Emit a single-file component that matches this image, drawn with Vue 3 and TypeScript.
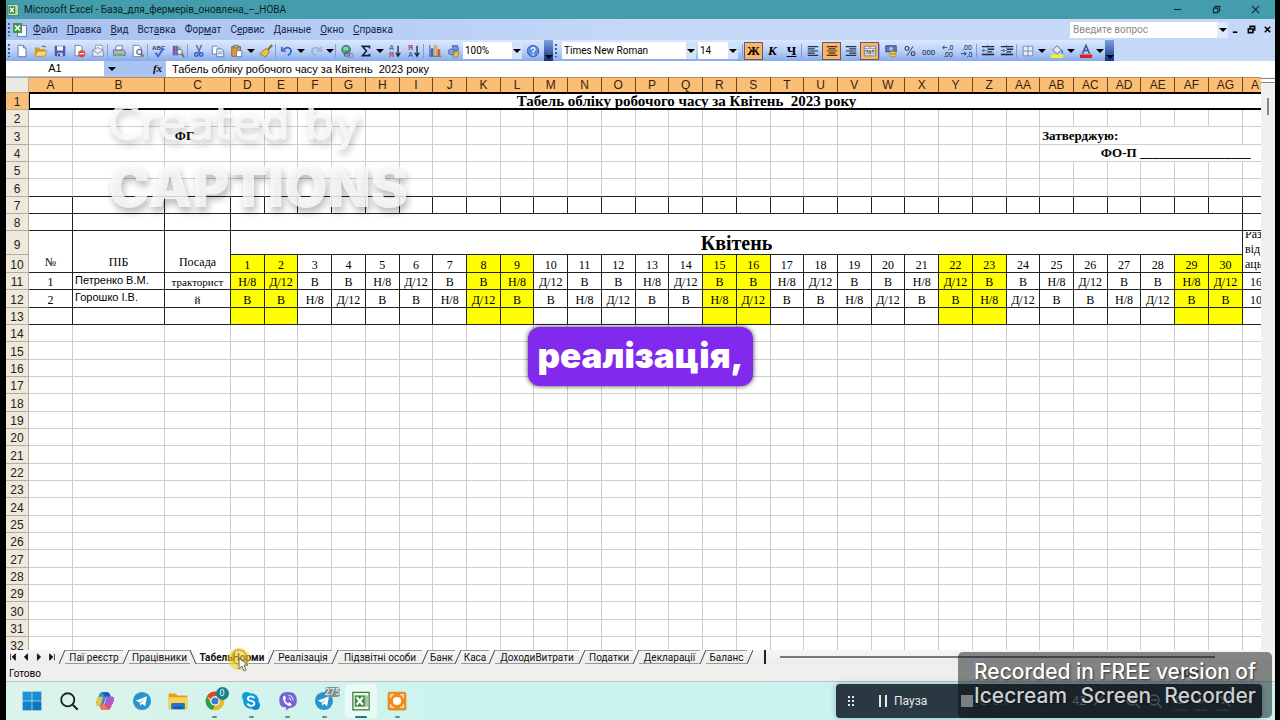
<script setup lang="ts">
import { ref } from 'vue'

interface Tool { kind: 'btn' | 'sep' | 'arrow'; icon?: string; label?: string; on?: boolean }
interface Tab { name: string; width: number; active?: boolean }
interface App { name: string; icon: string; running?: boolean; active?: boolean; badge?: string; tone?: string }
interface Cell { text?: string; span?: number; rows?: number; cls?: string; lines?: string[] }
interface Row { n: number; cells: Cell[]; cls?: string }

const icons: Record<string, string> = {
  new: '<path d="M3.5 1.5h6l3 3v10h-9z" fill="#fff" stroke="#5a6f96"/><path d="M9.500 1.500v3h3" fill="#cbd8ee" stroke="#5a6f96"/>',
  open: '<path d="M1 4h5l1 2h6v8H1z" fill="#d9962a"/><path d="M1 14l3-6h11l-3 6z" fill="#ffd76b" stroke="#b57a1c" stroke-width=".7"/><path d="M9 3q3-2 4 1" fill="none" stroke="#557" stroke-width="1.200"/>',
  save: '<path d="M2 2h12v12H2z" fill="#4b57b8"/><path d="M4.500 2.500h7v5h-7z" fill="#eef1fb"/><path d="M5 10h6v4H5z" fill="#c8cfe6"/><path d="M6 11h2v3H6z" fill="#333c80"/>',
  perm: '<path d="M3.500 1.500h6l2 2v10h-8z" fill="#fff" stroke="#66789c"/><circle cx="11" cy="11" r="4" fill="#e0452c"/><path d="M8.500 10.200h5v1.600h-5z" fill="#fff"/>',
  mail: '<path d="M5 1.500h8v8H5z" fill="#fff" stroke="#8793ab"/><path d="M2 7l6-3 6 3v7H2z" fill="#e7ebf4" stroke="#7d8aa6"/><path d="M2 7l6 4 6-4" fill="none" stroke="#7d8aa6"/>',
  print: '<path d="M5 2h7l-1 5H4z" fill="#fff" stroke="#6a7890"/><path d="M1.500 7h12l1.500 2v4H2z" fill="#aeb8c8" stroke="#59677f"/><path d="M4 11h8v3H4z" fill="#6fb35c"/>',
  preview: '<path d="M2.500 1.500h6l3 3v10h-9z" fill="#fff" stroke="#66789c"/><circle cx="9.500" cy="9" r="3" fill="#d8ecfb" stroke="#555f75" stroke-width="1.200"/><path d="M11.500 11.500l3 3" stroke="#8b6b3a" stroke-width="2"/>',
  spell: '<text x="0" y="7" font-size="7" font-weight="700" font-family="Liberation Sans" fill="#333c55">ABC</text><path d="M4 10l3 4 6-9" fill="none" stroke="#4668d6" stroke-width="2.300"/>',
  research: '<path d="M2 2h3v11H2z" fill="#8b4d9c"/><path d="M5 2h3v11H5z" fill="#4a74c9"/><path d="M8 3h3v10H8z" fill="#d5a748"/><circle cx="10" cy="9" r="3" fill="#e4f1fb" stroke="#555f75"/><path d="M12 11l3 4" stroke="#8b6b3a" stroke-width="2"/>',
  cut: '<path d="M5 1l4 9M11 1L7 10" stroke="#5d6f94" stroke-width="1.500"/><circle cx="5" cy="12" r="2" fill="none" stroke="#2f5cc4" stroke-width="1.600"/><circle cx="10.500" cy="12" r="2" fill="none" stroke="#2f5cc4" stroke-width="1.600"/>',
  copy: '<path d="M1.500 2.500h5l2 2v7h-7z" fill="#fff" stroke="#5f77ab"/><path d="M6.500 5.500h5l3 2v7h-8z" fill="#e9effb" stroke="#5f77ab"/><path d="M8 9h5M8 11h5" stroke="#7f97c8"/>',
  paste: '<path d="M2 3h10v11H2z" fill="#d99b32" stroke="#8c5f17"/><path d="M4.500 1.500h5v3h-5z" fill="#b8bfcc" stroke="#666"/><path d="M7.500 7.500h6v7h-6z" fill="#fff" stroke="#5f77ab"/>',
  brush: '<path d="M15 1l-5 6" stroke="#8a6a2f" stroke-width="2.500"/><path d="M8 5l4 4-5 6-6-4z" fill="#f0c04d" stroke="#96701f"/>',
  undo: '<path d="M2 3v5h5" fill="none" stroke="#3d63c6" stroke-width="1.800"/><path d="M3 7q6-5 9-1 2 4-3 7" fill="none" stroke="#3d63c6" stroke-width="2"/>',
  redo: '<path d="M14 3v5H9" fill="none" stroke="#9db0d6" stroke-width="1.800"/><path d="M13 7Q7 2 4 6q-2 4 3 7" fill="none" stroke="#9db0d6" stroke-width="2"/>',
  link: '<circle cx="7" cy="6.500" r="5" fill="#4a9c8c" stroke="#2b6b7c"/><path d="M4 4q3-2 5 0t-2 3-3 0z" fill="#98d67f"/><rect x="5" y="10" width="6" height="4" rx="2" fill="none" stroke="#54627f" stroke-width="1.400"/><rect x="9" y="11" width="6" height="4" rx="2" fill="none" stroke="#8592ad" stroke-width="1.400"/>',
  sum: '<path d="M12 5V2.800H4L8.500 8 4 13.200h8V11" fill="none" stroke="#16213f" stroke-width="1.900"/>',
  az: '<text x="1" y="7" font-size="8" font-weight="700" font-family="Liberation Sans" fill="#4a5fb5">А</text><text x="1" y="15" font-size="8" font-weight="700" font-family="Liberation Sans" fill="#a8485c">Я</text><path d="M11.500 2v11M9 10l2.500 4 2.500-4" fill="none" stroke="#1d2440" stroke-width="1.500"/>',
  za: '<text x="1" y="7" font-size="8" font-weight="700" font-family="Liberation Sans" fill="#a8485c">Я</text><text x="1" y="15" font-size="8" font-weight="700" font-family="Liberation Sans" fill="#4a5fb5">А</text><path d="M11.500 2v11M9 10l2.500 4 2.500-4" fill="none" stroke="#1d2440" stroke-width="1.500"/>',
  chart: '<path d="M2 1v13h13" fill="none" stroke="#4b5877"/><path d="M3 5h3v9H3z" fill="#3f63c9"/><path d="M7 2h3v12H7z" fill="#edc44b" stroke="#95701f" stroke-width=".5"/><path d="M11 6h3v8h-3z" fill="#cf5a35"/>',
  draw: '<path d="M6 2l6 0 1 5-5 1z" fill="#7c93dd" stroke="#3c519c"/><circle cx="5" cy="9" r="3.500" fill="#7f9ce0" stroke="#3c519c" stroke-width=".7"/><path d="M8 9h6l-2 6H7z" fill="#e8bf5b" stroke="#8b671c" stroke-width=".7"/>',
  help: '<circle cx="8" cy="8" r="6.500" fill="#5b8de0" stroke="#2c57ab"/><path d="M5.800 6.300q.3-2.300 2.400-2.200 2.200.2 2.100 2-.1 1.200-2.100 2.300V10" fill="none" stroke="#fff" stroke-width="1.500"/><circle cx="8.200" cy="12" r="1" fill="#fff"/>',
  left: '<path d="M2 3h12M2 5.500h8M2 8h12M2 10.500h8M2 13h12" stroke="#27304d" stroke-width="1.300"/>',
  center: '<path d="M2 3h12M4 5.500h8M2 8h12M4 10.500h8M2 13h12" stroke="#4b3018" stroke-width="1.300"/>',
  right: '<path d="M2 3h12M6 5.500h8M2 8h12M6 10.500h8M2 13h12" stroke="#27304d" stroke-width="1.300"/>',
  merge: '<path d="M1.500 2.500h13v11h-13z" fill="#f4f4f4" stroke="#777"/><path d="M8 2v3M8 11v3M1 5h14M1 11h14" stroke="#888"/><path d="M2 8h3M14 8h-3M4 6.500L6 8 4 9.500M12 6.500L10 8l2 1.500" stroke="#2b3c78" fill="none"/><text x="6" y="10.500" font-size="6" font-family="Liberation Sans" fill="#111">a</text>',
  money: '<path d="M2 2h12v7H2z" fill="#5c79b8" stroke="#34497c"/><circle cx="8" cy="5.500" r="2" fill="#b8cbee"/><ellipse cx="10" cy="10" rx="4" ry="1.800" fill="#ecc45a" stroke="#8b671c" stroke-width=".6"/><ellipse cx="10" cy="13" rx="4" ry="1.800" fill="#ecc45a" stroke="#8b671c" stroke-width=".6"/>',
  pct: '<circle cx="4.500" cy="5" r="2.200" fill="none" stroke="#2b3350" stroke-width="1.200"/><circle cx="11.500" cy="11" r="2.200" fill="none" stroke="#2b3350" stroke-width="1.200"/><path d="M11.500 2.500l-7 11" stroke="#2b3350"/>',
  zeros: '<text x="0" y="12" font-size="9" font-family="Roboto" fill="#1f2742">000</text>',
  incdec: '<text x="8" y="7" font-size="8" font-family="Roboto" fill="#1f2742">,0</text><text x="3" y="15" font-size="8" font-family="Roboto" fill="#1f2742">,00</text><path d="M7 4H2M4 2L2 4l2 2" fill="none" stroke="#3658c0" stroke-width="1.200"/>',
  decdec: '<text x="3" y="7" font-size="8" font-family="Roboto" fill="#1f2742">,00</text><text x="8" y="15" font-size="8" font-family="Roboto" fill="#1f2742">,0</text><path d="M1 11h6M5 9l2 2-2 2" fill="none" stroke="#3658c0" stroke-width="1.200"/>',
  outdent: '<path d="M1 3h14M8 6h7M8 9h5M1 12h14" stroke="#1f2742" stroke-width="1.500"/><path d="M6 7.500H1.500M3.500 5.500l-2 2 2 2" stroke="#3658c0" fill="none"/><path d="M7.500 1v14" stroke="#555" stroke-dasharray="1 1"/>',
  indent: '<path d="M1 3h14M8 6h7M8 9h5M1 12h14" stroke="#1f2742" stroke-width="1.500"/><path d="M1 7.500h4.500M3.500 5.500l2 2-2 2" stroke="#3658c0" fill="none"/><path d="M7.500 1v14" stroke="#555" stroke-dasharray="1 1"/>',
  border: '<path d="M2.500 2.500h11v11h-11zM8 2.500v11M2.500 8h11" fill="#e6eefc" stroke="#7484a6"/>',
  fill: '<path d="M3 7l5-5 5 5-5 4z" fill="#e3e8f2" stroke="#56647f"/><path d="M13 7q2 2 1 4" stroke="#3a66c9" stroke-width="1.600" fill="none"/><path d="M1 12h14v4H1z" fill="#f3ee2e"/>',
  color: '<path d="M4 11L8 1.500 12 11M5.500 7.500h5" fill="none" stroke="#3d5590" stroke-width="1.700"/><path d="M1 12h14v4H1z" fill="#e02020"/>',
  fx: '<text x="2" y="12" font-size="12" font-style="italic" font-weight="700" font-family="Liberation Serif" fill="#111">fx</text>',
  excel: '<path d="M1 1h14v14H1z" fill="#e9f4e4" stroke="#2e7a35"/><path d="M10.500 3h4v10h-4z" fill="#b7d7ae"/><path d="M2 3h9v10H2z" fill="#348a3c"/><path d="M4 5l5 6M9 5l-5 6" stroke="#fff" stroke-width="1.800"/>',
  book: '<path d="M5.500 3.500h9v11h-9z" fill="#f5f8ff" stroke="#6c7fae"/><path d="M1 1h9v10H1z" fill="#3f9a45"/><path d="M3 3.500l5 5M8 3.500l-5 5" stroke="#fff" stroke-width="1.500"/>',
  win: '<path d="M1 1h14.500v14.500H1z" fill="#1f93dc"/><path d="M16.500 1H31v14.500H16.500z" fill="#188bd5"/><path d="M1 16.500h14.500V31H1z" fill="#157fca"/><path d="M16.500 16.500H31V31H16.500z" fill="#0f73bd"/>',
  search: '<circle cx="14" cy="14" r="10.500" fill="none" stroke="#1c2626" stroke-width="3"/><path d="M22 22l8 8" stroke="#1c2626" stroke-width="3.500"/>',
  copilot: '<path d="M11 2h9q3 0 4 4l1 3h-7l-5 14H5q-5 0-3-6L7 5q1-3 4-3z" fill="#2a8fd8"/><path d="M11 2h9q3 0 4 4l1 3h-7q-3 0-4-3-1-3-3-4z" fill="#2356b8"/><path d="M2 17L5 9h8l-4 14H5q-5 0-3-6z" fill="#e6c43c"/><path d="M21 30h-9q-3 0-4-4l-1-3h7l5-14h8q5 0 3 6l-5 12q-1 3-4 3z" fill="#d94f8e"/><path d="M19 9h8q5 0 3 6l-2 6h-9l-1-8z" fill="#a95ad5"/><path d="M21 30h-9q-3 0-4-4l-1-3h7q3 0 4 3t3 4z" fill="#ef7e46"/>',
  telegram: '<circle cx="16" cy="16" r="14.500" fill="#2a94cf"/><path d="M6 15.500l18-7-3 16-5-4-3 3-.5-5z" fill="#fff"/><path d="M12.500 18.500l8-7-6 8z" fill="#8dbfde"/>',
  folder: '<path d="M1 4h11l3 3h16v22H1z" fill="#e0a21d"/><path d="M1 10h30v19H1z" fill="#fbd158"/><path d="M5 21q0-2 2-2h18q2 0 2 2v8H5z" fill="#1f77cc"/><path d="M9 25h14v4H9z" fill="#155ba5"/>',
  chrome: '<circle cx="16" cy="16" r="15" fill="#e3bd2b"/><path d="M16 16L3 8.500A15 15 0 0 1 29 8.500H16z" fill="#d94433"/><path d="M3 8.500L10 20l6 3-4 7.500A15 15 0 0 1 3 8.500z" fill="#2e9a4c"/><circle cx="16" cy="16" r="7.500" fill="#fff"/><circle cx="16" cy="16" r="5.700" fill="#3b79dd"/>',
  skype: '<circle cx="16" cy="16" r="12.500" fill="#119bdc"/><circle cx="9" cy="9" r="7.500" fill="#119bdc"/><circle cx="23" cy="23" r="7.500" fill="#0d8dd0"/><path d="M21 11.500q-1-3-5-3-5 0-5 3.500 0 3 5 3.800 5.500 1 5.500 4 0 3.700-5.500 3.700-4.500 0-5.500-3.500" fill="none" stroke="#fff" stroke-width="3"/>',
  viber: '<path d="M5 5q3-3.500 11-3.500T27 5q3 3 3 10t-3 9q-3 3-9 3l-5 4v-4.500Q7 26 5 24q-3-3-3-9.500T5 5z" fill="#7a62d8"/><path d="M10 7q2 1 3 5l-2 2q1 4 5 6l2-2q3 1 4 4-2 3-6 1Q9 20 8 11q0-3 2-4z" fill="#fff"/><path d="M17 7q7 1 7 8M17 11q3 0 3.500 4" fill="none" stroke="#fff" stroke-width="1.500"/>',
  xl: '<path d="M3 2h26v28H3z" fill="#eff6e9" stroke="#357c3b" stroke-width="2"/><path d="M21 7h6v18h-6z" fill="#9fc896"/><path d="M6 7h16v18H6z" fill="#3d8944"/><path d="M9 10l10 12M19 10L9 22" stroke="#fff" stroke-width="3.500"/>',
  ice: '<rect x="1" y="1" width="30" height="30" rx="4" fill="#ef8a1d"/><circle cx="16" cy="16" r="6.500" fill="#fff"/><path d="M6 11V6h5M21 6h5v5M26 21v5h-5M11 26H6v-5" fill="none" stroke="#fff" stroke-width="1.800"/>',
}

const b = (icon: string, label: string, on = false): Tool => ({ kind: 'btn', icon, label, on })
const sep: Tool = { kind: 'sep' }
const arrow: Tool = { kind: 'arrow', label: 'Ещё' }

const standard: Tool[] = [
  b('new', 'Создать'), b('open', 'Открыть'), b('save', 'Сохранить'), b('perm', 'Разрешения'), b('mail', 'Сообщение'), sep,
  b('print', 'Печать'), b('preview', 'Предварительный просмотр'), sep, b('spell', 'Орфография'), b('research', 'Справочные материалы'), sep,
  b('cut', 'Вырезать'), b('copy', 'Копировать'), b('paste', 'Вставить'), arrow, b('brush', 'Формат по образцу'), sep,
  b('undo', 'Отменить'), arrow, b('redo', 'Вернуть'), arrow, sep, b('link', 'Гиперссылка'), b('sum', 'Автосумма'), arrow,
  b('az', 'По возрастанию'), b('za', 'По убыванию'), sep, b('chart', 'Диаграмма'), b('draw', 'Рисование'),
]
const formatting: Tool[] = [
  b('left', 'По левому краю'), b('center', 'По центру', true), b('right', 'По правому краю'), b('merge', 'Объединить', true), sep,
  b('money', 'Денежный формат'), b('pct', 'Процентный формат'), b('zeros', 'Формат с разделителями'), b('incdec', 'Увеличить разрядность'), b('decdec', 'Уменьшить разрядность'), sep,
  b('outdent', 'Уменьшить отступ'), b('indent', 'Увеличить отступ'), sep, b('border', 'Границы'), arrow, b('fill', 'Цвет заливки'), arrow, b('color', 'Цвет шрифта'), arrow,
]

const menus: [string, string, string][] = [
  ['', 'Ф', 'айл'], ['', 'П', 'равка'], ['', 'В', 'ид'], ['Вст', 'а', 'вка'], ['Фор', 'м', 'ат'],
  ['С', 'е', 'рвис'], ['', 'Д', 'анные'], ['', 'О', 'кно'], ['', 'С', 'правка'],
]

const letters = 'ABCDEFGHIJKLMNOPQRSTUVWXYZ'.split('')
const columns = [...letters, ...letters.slice(0, 7).map(l => 'A' + l), 'A']

const weekend = (d: number) => [1, 2].includes(d % 7)
const days = Array.from({ length: 30 }, (_, i) => i + 1)
const shift = ['Н/8', 'Д/12', 'В', 'В']
const dayCells = (text: (d: number) => string): Cell[] =>
  days.map(d => ({ text: text(d), cls: weekend(d) ? 'k yellow' : 'k' }))
const empty = (count: number, cls = ''): Cell[] => Array.from({ length: count }, () => ({ cls }))

const rows: Row[] = [
  { n: 1, cls: 'selected', cells: [{ text: 'Табель обліку робочого часу за Квітень\u00a0 2023 року', span: 34, cls: 'title' }] },
  { n: 2, cells: empty(34) },
  { n: 3, cells: [...empty(2), { text: 'ФГ', cls: 'bold indent' }, ...empty(24), { text: 'Затверджую:', span: 6, cls: 'bold start' }, {}] },
  { n: 4, cells: [...empty(27), { text: 'ФО-П _________________', span: 7, cls: 'bold sign' }] },
  { n: 5, cells: empty(34) },
  { n: 6, cells: empty(34, 'over') },
  { n: 7, cells: empty(34, 'k') },
  { n: 8, cells: [...empty(3, 'k'), { span: 30, cls: 'k' }, { cls: 'k' }] },
  { n: 9, cls: 'tall', cells: [
    { text: '№', rows: 2, cls: 'k head' }, { text: 'ПІБ', rows: 2, cls: 'k head' }, { text: 'Посада', rows: 2, cls: 'k head' },
    { text: 'Квітень', span: 30, cls: 'k month' }, { lines: ['Раз', 'від', 'аць'], rows: 2, cls: 'k' }] },
  { n: 10, cells: dayCells(d => String(d)) },
  { n: 11, cells: [{ text: '1', cls: 'k' }, { text: 'Петренко В.М.', cls: 'k name' }, { text: 'тракторист', cls: 'k post' }, ...dayCells(d => shift[(d - 1) % 4]), { text: '16', cls: 'k edge' }] },
  { n: 12, cells: [{ text: '2', cls: 'k' }, { text: 'Горошко І.В.', cls: 'k name' }, { text: 'й', cls: 'k post' }, ...dayCells(d => shift[(d + 1) % 4]), { text: '10', cls: 'k edge' }] },
  { n: 13, cells: [...empty(3, 'k'), ...dayCells(() => ''), { cls: 'k' }] },
  ...Array.from({ length: 19 }, (_, i) => ({ n: 14 + i, cells: empty(34) })),
]

const tabs: Tab[] = [
  { name: 'Паї реєстр', width: 64 }, { name: 'Працівники', width: 67 }, { name: 'ТабельНорми', width: 78, active: true },
  { name: 'Реалізація', width: 64 }, { name: 'Підзвітні особи', width: 90 }, { name: 'Банк', width: 33 }, { name: 'Каса', width: 34 },
  { name: 'ДоходиВитрати', width: 90 }, { name: 'Податки', width: 54 }, { name: 'Декларації', width: 67 }, { name: 'Баланс', width: 47 },
]
const navs = ['M2 1v8M8 1L4 5l4 4z', 'M7 1L3 5l4 4z', 'M3 1l4 4-4 4z', 'M8 1v8M2 1l4 4-4 4z']

const apps: App[] = [
  { name: 'Пуск', icon: 'win' }, { name: 'Поиск', icon: 'search' }, { name: 'Copilot', icon: 'copilot' }, { name: 'Telegram', icon: 'telegram' },
  { name: 'Проводник', icon: 'folder' }, { name: 'Chrome', icon: 'chrome', running: true, badge: '0', tone: 'teal' }, { name: 'Skype', icon: 'skype', running: true },
  { name: 'Viber', icon: 'viber', running: true }, { name: 'Telegram 2', icon: 'telegram', running: true, badge: '275', tone: 'grey' },
  { name: 'Excel', icon: 'xl', running: true, active: true }, { name: 'Icecream', icon: 'ice', running: true },
]

const question = ref('')
const cellName = ref('A1')
const formula = ref('Табель обліку робочого часу за Квітень\u00a0 2023 року')
</script>

<template>
  <div class="screen">
    <header class="titlebar">
      <svg class="ic12" viewBox="0 0 16 16" v-html="icons.excel" />
      <span class="caption">Microsoft Excel - База_для_фермерів_оновлена_–_НОВА</span>
      <div class="winbtns">
        <button aria-label="Свернуть"><svg viewBox="0 0 10 10"><path d="M1 5h8" /></svg></button>
        <button aria-label="Восстановить"><svg viewBox="0 0 10 10"><path d="M1.500 3.500h5v5h-5zM3.500 3V1.500h5v5H7" /></svg></button>
        <button aria-label="Закрыть"><svg viewBox="0 0 10 10"><path d="M1 1l8 8M9 1L1 9" /></svg></button>
      </div>
    </header>

    <nav class="menubar">
      <span class="grip" />
      <svg class="ic14" viewBox="0 0 16 16" v-html="icons.book" />
      <button v-for="m in menus" :key="m.join('')" class="menu">{{ m[0] }}<u>{{ m[1] }}</u>{{ m[2] }}</button>
      <div class="ask">
        <input v-model="question" aria-label="Введите вопрос" placeholder="Введите вопрос">
        <button aria-label="Список вопросов"><i class="tri" /></button>
      </div>
      <div class="docbtns">
        <button aria-label="Свернуть книгу"><svg viewBox="0 0 10 10"><path d="M2 8h5" /></svg></button>
        <button aria-label="Восстановить книгу"><svg viewBox="0 0 10 10"><path d="M1.500 4.500h5v4h-5zM3.500 4V1.500h5v4H7" /></svg></button>
        <button aria-label="Закрыть книгу"><svg viewBox="0 0 10 10"><path d="M2 2l6 6M8 2L2 8" /></svg></button>
      </div>
    </nav>

    <div class="toolbars">
      <div class="toolbar">
        <span class="grip" />
        <template v-for="(t, i) in standard" :key="i">
          <span v-if="t.kind === 'sep'" class="sep" />
          <button v-else-if="t.kind === 'arrow'" class="drop" :aria-label="t.label"><i class="tri" /></button>
          <button v-else class="tool" :aria-label="t.label"><svg viewBox="0 0 16 16" v-html="icons[t.icon!]" /></button>
        </template>
        <span class="pick zoom"><select aria-label="Масштаб"><option>100%</option></select><i class="tri" /></span>
        <button class="tool wide" aria-label="Справка"><svg viewBox="0 0 16 16" v-html="icons.help" /></button>
        <button class="end" aria-label="Параметры панели"><i class="tri" /></button>
      </div>
      <div class="toolbar">
        <span class="grip" />
        <span class="pick font"><select aria-label="Шрифт"><option>Times New Roman</option></select><i class="tri" /></span>
        <span class="pick size"><select aria-label="Размер"><option>14</option></select><i class="tri" /></span>
        <span class="sep" />
        <button class="tool glyph on">Ж</button>
        <button class="tool glyph"><em>К</em></button>
        <button class="tool glyph"><u>Ч</u></button>
        <span class="sep" />
        <template v-for="(t, i) in formatting" :key="i">
          <span v-if="t.kind === 'sep'" class="sep" />
          <button v-else-if="t.kind === 'arrow'" class="drop" :aria-label="t.label"><i class="tri" /></button>
          <button v-else class="tool" :class="{ on: t.on }" :aria-label="t.label"><svg viewBox="0 0 16 16" v-html="icons[t.icon!]" /></button>
        </template>
        <button class="end" aria-label="Параметры панели"><i class="tri" /></button>
      </div>
    </div>

    <div class="formulabar">
      <input v-model="cellName" class="namebox" aria-label="Имя ячейки">
      <button class="namedrop" aria-label="Список имён"><i class="tri" /></button>
      <button class="fx" aria-label="Вставка функции"><svg viewBox="0 0 16 16" v-html="icons.fx" /></button>
      <input v-model="formula" class="formula" aria-label="Строка формул">
    </div>

    <main class="sheet">
      <div class="grid">
        <table>
          <colgroup><col class="c-num"><col class="c-a"><col class="c-b"><col class="c-c"><col v-for="d in days" :key="d"><col class="c-last"></colgroup>
          <thead>
            <tr><th class="corner" /><th v-for="(c, i) in columns" :key="i" scope="col">{{ c }}</th></tr>
          </thead>
          <tbody>
            <tr v-for="r in rows" :key="r.n" :class="[r.cls, { plus: r.n % 3 === 0 || r.n === 10 }]">
              <th scope="row">{{ r.n }}</th>
              <td v-for="(c, i) in r.cells" :key="i" :colspan="c.span" :rowspan="c.rows" :class="c.cls">
                <div v-if="c.lines" class="stack"><span v-for="l in c.lines" :key="l">{{ l }}</span></div>
                <template v-else>{{ c.text }}</template>
              </td>
            </tr>
          </tbody>
        </table>
        <div class="maker"><span class="thin">Created by</span><span class="fat">CAPTIONS</span></div>
        <div class="subtitle"><span>реалізація,</span></div>
      </div>
      <div class="vscroll"><span class="split" /><span class="thumb" /></div>
    </main>

    <div class="tabrow">
      <button v-for="(n, i) in navs" :key="i" class="nav" aria-label="Прокрутка листов"><svg viewBox="0 0 10 10"><path :d="n" /></svg></button>
      <svg class="slash first" viewBox="0 0 6 14"><path d="M0 14L6 0" /></svg>
      <template v-for="(t, i) in tabs" :key="t.name">
        <button class="tab" :class="{ active: t.active }" :style="{ width: t.width - 6 + 'px' }">
          {{ t.name }}
          <span v-if="t.active" class="pointer">
            <svg viewBox="0 0 26 26"><circle cx="13" cy="13" r="11" fill="#f2d21c" opacity=".7" /><circle cx="13" cy="11" r="7" fill="none" stroke="#cf9b12" stroke-width="1.500" /><path d="M13 12v11l3-3 2 5 2-1-2-5h4z" fill="#fff" stroke="#555" /></svg>
          </span>
        </button>
        <svg class="slash" viewBox="0 0 6 14"><path :d="i === 1 ? 'M0 0L6 14' : 'M0 14L6 0'" /></svg>
      </template>
      <span class="tabend" />
      <span class="hscroll" />
    </div>

    <footer class="status"><span>Готово</span><span>NUM</span></footer>

    <div class="taskbar">
      <div class="apps">
        <button v-for="a in apps" :key="a.name" :class="{ active: a.active, running: a.running }" :aria-label="a.name">
          <svg viewBox="0 0 32 32" v-html="icons[a.icon]" />
          <span v-if="a.badge" class="badge" :class="a.tone">{{ a.badge }}</span>
        </button>
      </div>
      <div class="recorder">
        <svg class="dots" viewBox="0 0 8 12"><path d="M1 1h2v2H1zM5 1h2v2H5zM1 5h2v2H1zM5 5h2v2H5zM1 9h2v2H1zM5 9h2v2H5z" /></svg>
        <button class="pause"><svg viewBox="0 0 10 12"><path d="M1 0h2v12H1zM7 0h2v12H7z" /></svg>Пауза</button>
        <button class="stop"><i />Стоп</button>
        <span class="time">42</span>
        <svg class="extras" viewBox="0 0 170 20"><g fill="none" stroke="#8a98a2" stroke-width="1.300"><path d="M8 14l9-9" /><circle cx="46" cy="9" r="5" /><path d="M50 13l4 4M43 9h6M46 6v6" /><circle cx="68" cy="9" r="5" /><path d="M72 13l4 4M65 9h6" /><path d="M91 6h9v6h-9zM114 4v7M110 9q4 6 8 0M134 5l10 10M144 5l-8 8M158 5l8 8M166 5l-8 8" /></g><path d="M88 19h14" stroke="#52646c" /><path d="M109 19h12M130 19h12" stroke="#2a8f6a" /></svg>
      </div>
    </div>

    <div class="stamp">
      <p><span>Recorded</span><span>in</span><span>FREE</span><span>version</span><span>of</span></p>
      <p><span>Icecream</span><span>Screen</span><span>Recorder</span></p>
    </div>
  </div>
</template>

<style>
html, body { margin: 0; background: #000; }
</style>

<style scoped>
* { box-sizing: border-box; }
button, input, select { font: inherit; color: inherit; margin: 0; padding: 0; border: 0; background: none; border-radius: 0; outline: 0; }
.screen { position: relative; display: flex; flex-direction: column; height: 100vh; padding: 0 5px 0 6px; overflow: hidden; background: #000; color: #000; font: 10px/14px Roboto, "Open Sans", sans-serif; }
.tri { display: block; border: 4px solid transparent; border-top-color: #000; border-bottom: 0; }

.titlebar { flex: none; display: flex; align-items: center; gap: 5px; height: 19px; padding-left: 1px; background: #449dac; color: #0c2329; }
.ic12 { width: 12px; height: 12px; }
.ic14 { width: 16px; height: 16px; }
.caption { flex: 1; white-space: nowrap; }
.winbtns { display: flex; }
.winbtns button { display: flex; justify-content: center; width: 39px; }
.winbtns svg { width: 9px; height: 9px; fill: none; stroke: #0d2a30; stroke-width: 1.2; }

.menubar { flex: none; display: flex; align-items: center; height: 21px; background: linear-gradient(90deg, #a5bff0, #c5d8f8 50%); color: #15244a; }
.grip { flex: none; width: 2px; height: 13px; margin: 0 2px; background: repeating-linear-gradient(#3d5ea5 0 2px, transparent 2px 4px); }
.menu { padding: 0 4px 0 5px; white-space: nowrap; }
.menu u { text-underline-offset: 1px; }
.ask { display: flex; width: 158px; height: 16px; margin-left: auto; background: #fff; }
.ask input { flex: 1; min-width: 0; padding-left: 3px; }
.ask input::placeholder { color: #8b8b8b; opacity: 1; }
.ask button { display: flex; align-items: center; justify-content: center; width: 11px; background: #dfe9fb; }
.docbtns { display: flex; width: 47px; justify-content: space-around; }
.docbtns svg { display: block; width: 9px; height: 9px; fill: none; stroke: #000; stroke-width: 1.8; }

.toolbars { flex: none; display: flex; height: 21px; background: #c5d8f8; }
.toolbar { display: flex; align-items: center; height: 21px; background: linear-gradient(#dbe8fd, #bcd2f8 50%, #86abea); }
.tool { flex: none; display: flex; align-items: center; justify-content: center; width: 19px; height: 18px; }
.tool svg { width: 14px; height: 14px; }
.tool.wide { width: 22px; }
.tool.on { border: 1px solid #5b5a78; background: #fbb563; }
.glyph { font: 700 13px/16px "Liberation Serif", serif; }
.sep { flex: none; width: 1px; height: 14px; margin-right: 1px; background: #7f9fd6; }
.drop { flex: none; display: flex; align-items: center; justify-content: center; width: 10px; height: 18px; }
.pick { position: relative; flex: none; display: flex; height: 17px; background: #fff; }
.pick select { width: 100%; appearance: none; padding-left: 2px; }
.pick .tri { position: absolute; z-index: 1; right: 1px; top: 7px; }
.pick::after { content: ""; position: absolute; right: 0; top: 0; width: 10px; height: 100%; background: #d3e1fa; }
.zoom { width: 59px; }
.font { width: 134px; margin: 0 2px 0 3px; }
.size { width: 40px; margin-right: 4px; }
.end { flex: none; display: flex; align-items: flex-end; justify-content: center; width: 9px; height: 21px; padding-bottom: 2px; background: linear-gradient(#7ba0e4, #12347f); }

.formulabar { flex: none; display: flex; height: 16px; background: #a9c3f3; font: 11px/15px "Liberation Sans", sans-serif; }
.namebox { width: 98px; height: 15px; text-align: center; background: #fff; }
.namedrop { display: flex; align-items: center; justify-content: center; width: 16px; }
.fx { width: 46px; text-align: right; }
.fx svg { width: 15px; height: 15px; }
.formula { flex: 1; min-width: 0; padding-left: 6px; background: #fff; }

.sheet { flex: 1; min-height: 0; display: flex; background: #fff; }
.grid { position: relative; flex: 1; min-width: 0; overflow: hidden; }
table { width: 100%; table-layout: fixed; border-collapse: separate; border-spacing: 0; }
.c-num { width: 23px; }
.c-a { width: 44px; }
.c-b { width: 92px; }
.c-c { width: 66px; }
.c-last { width: 18px; }
th, td { height: 17px; padding: 0; overflow: hidden; white-space: nowrap; text-align: center; vertical-align: bottom; border: 0 solid #cdcdcd; border-width: 0 1px 1px 0; }
th { font: 12px/14px "Liberation Sans", sans-serif; color: #222; }
thead th { height: 16px; background: #fabf74; color: #3c2108; border-color: #6b4620; border-bottom-color: #000; border-top: 1px solid #b98a50; }
thead th.corner { background: #ece9e0; border-color: #b5ab96; }
thead th:last-child { border-right: 0; text-align: left; padding-left: 8px; }
tbody th { background: #efe9dc; border-color: #b5ab96; }
tbody .selected th { background: #fabf74; }
td { font: 12px/13px "Liberation Serif", serif; }
.plus th, .plus td { height: 18px; }
.tall th, .tall td { height: 24px; }
.tall th { line-height: 17px; }
td.k { border-color: #222; }
td.over { border-bottom-color: #222; }
td.yellow { background: #ff0; }
td.title { font: 700 15px/14px "Liberation Serif", serif; padding-left: 82px; border: 2px solid #000; border-width: 1px 0 2px 1px; }
td.bold { font: 700 13px/16px "Liberation Serif", serif; }
td.indent { position: relative; z-index: 1; padding-right: 26px; }
td.start { text-align: left; padding-left: 2px; }
td.sign { padding-left: 50px; }
td.month { font: 700 20px/22px "Liberation Serif", serif; }
td.head { padding-bottom: 3px; }
td.post { font-size: 11px; }
td.name { text-align: left; vertical-align: top; padding-left: 2px; font: 11px/15px "Liberation Sans", sans-serif; }
td.edge { text-align: left; padding-left: 7px; }
tr td:last-child { border-right-width: 0; }
tr:nth-child(10) td:last-child { border-right-width: 1px; }
.stack { display: flex; flex-direction: column; justify-content: flex-end; height: 40px; padding-left: 2px; overflow: hidden; text-align: left; line-height: 15px; }
.vscroll { position: relative; flex: none; width: 14px; background: #f0f0f0; }
.split { display: block; height: 5px; margin-top: 1px; background: #fff; border: 1px solid #888; border-width: 1px 0; }
.thumb { display: block; width: 2px; height: 17px; margin: 15px 0 0 6px; background: #858585; }

.maker { position: absolute; left: 102px; top: 17px; display: flex; flex-direction: column; color: rgba(250, 250, 250, .82); text-shadow: 2px 5px 7px rgba(0, 0, 0, .27); white-space: nowrap; }
.thin { font: 400 46px/58px "DejaVu Sans", sans-serif; -webkit-text-stroke: 1px rgba(250, 250, 250, .82); }
.fat { font: 900 56px/70px Inter, "DejaVu Sans", sans-serif; }
.subtitle { position: absolute; top: 250px; left: 0; right: 0; display: flex; justify-content: center; padding-left: 14px; }
.subtitle span { padding: 0 9px 2px; border-radius: 12px; background: #8229ee; color: #fff; font: 900 35px/57px Inter, "DejaVu Sans", sans-serif; box-shadow: 0 0 5px rgba(0, 0, 0, .75); }

.tabrow { position: relative; z-index: 2; flex: none; display: flex; align-items: stretch; height: 14px; background: linear-gradient(#f6f6f6, #ececec); color: #111; }
.nav { width: 13px; display: flex; align-items: center; justify-content: center; }
.nav svg { width: 8px; height: 8px; fill: #111; stroke: #111; }
.slash { flex: none; width: 6px; height: 14px; fill: none; stroke: #444; }
.first { margin-left: 1px; }
.tab { position: relative; flex: none; display: flex; align-items: center; justify-content: center; font: 10px/13px Roboto, sans-serif; white-space: nowrap; border: 1px solid #999; border-width: 1px 0; }
.tab.active { background: #fff; border-top-color: #fff; font-weight: 700; }
.pointer { position: absolute; left: 30px; top: -5px; }
.pointer svg { width: 26px; height: 26px; opacity: .85; }
.tabend { width: 2px; margin-left: 11px; background: #222; }
.hscroll { flex: 1; align-self: center; height: 2px; margin: 0 60px 0 14px; background: #777; }
.status { flex: none; display: flex; justify-content: space-between; height: 18px; padding: 2px 76px 0 3px; border-bottom: 1px solid #b8c5c4; background: #f0efee; line-height: 16px; }

.taskbar { flex: none; display: flex; align-items: center; justify-content: space-between; height: 38px; padding: 0 13px 0 10px; background: linear-gradient(90deg, #dcf3e9, #cbf4ee 35%, #c9f2f0); }
.apps { display: flex; justify-content: space-between; width: 397px; }
.apps button { position: relative; display: flex; align-items: center; justify-content: center; width: 32px; height: 34px; border-radius: 4px; }
.apps svg { width: 20px; height: 20px; }
.apps .active { background: #ecfaf7; }
.running::after { content: ""; position: absolute; bottom: 0; width: 5px; height: 2px; border-radius: 1px; background: #71898a; }
.running.active::after { width: 12px; background: #1b7a80; }
.badge { position: absolute; right: 2px; top: 3px; min-width: 13px; height: 13px; border-radius: 7px; color: #e8f8f8; font: 9px/13px Roboto, sans-serif; text-align: center; background: #1b7f8c; }
.badge.grey { right: 0; height: 10px; line-height: 10px; border-radius: 3px; background: #848e90; }
.recorder { display: flex; align-items: center; width: 426px; height: 34px; padding-left: 11px; border-radius: 4px; background: #2a3841; color: #e4e9ec; font: 12px/16px "Open Sans", sans-serif; box-shadow: 0 0 6px rgba(0, 60, 70, .3); }
.dots { width: 8px; height: 12px; fill: #e4e9ec; }
.pause { display: flex; align-items: center; gap: 6px; margin-left: 23px; font: 12px/16px Roboto, sans-serif; }
.pause svg { width: 10px; height: 12px; fill: #e4e9ec; }
.stop { display: flex; align-items: center; gap: 6px; margin-left: 34px; color: #71808a; }
.stop i { width: 12px; height: 12px; background: #e4e9ec; }
.time { margin-left: auto; color: #9aa5ac; }
.extras { width: 170px; height: 20px; margin-right: 6px; }

.stamp { position: absolute; right: 8px; bottom: 2px; z-index: 3; width: 314px; padding: 8px 16px 10px; border-radius: 5px; background: rgba(10, 12, 14, .48); color: #fff; font: 500 21px/24px Inter, "Open Sans", sans-serif; text-shadow: 1px 1px 2px rgba(0, 0, 0, .6); }
.stamp p { display: flex; justify-content: space-between; margin: 0; }
.stamp p:last-child { color: #ccd0d2; }
</style>
